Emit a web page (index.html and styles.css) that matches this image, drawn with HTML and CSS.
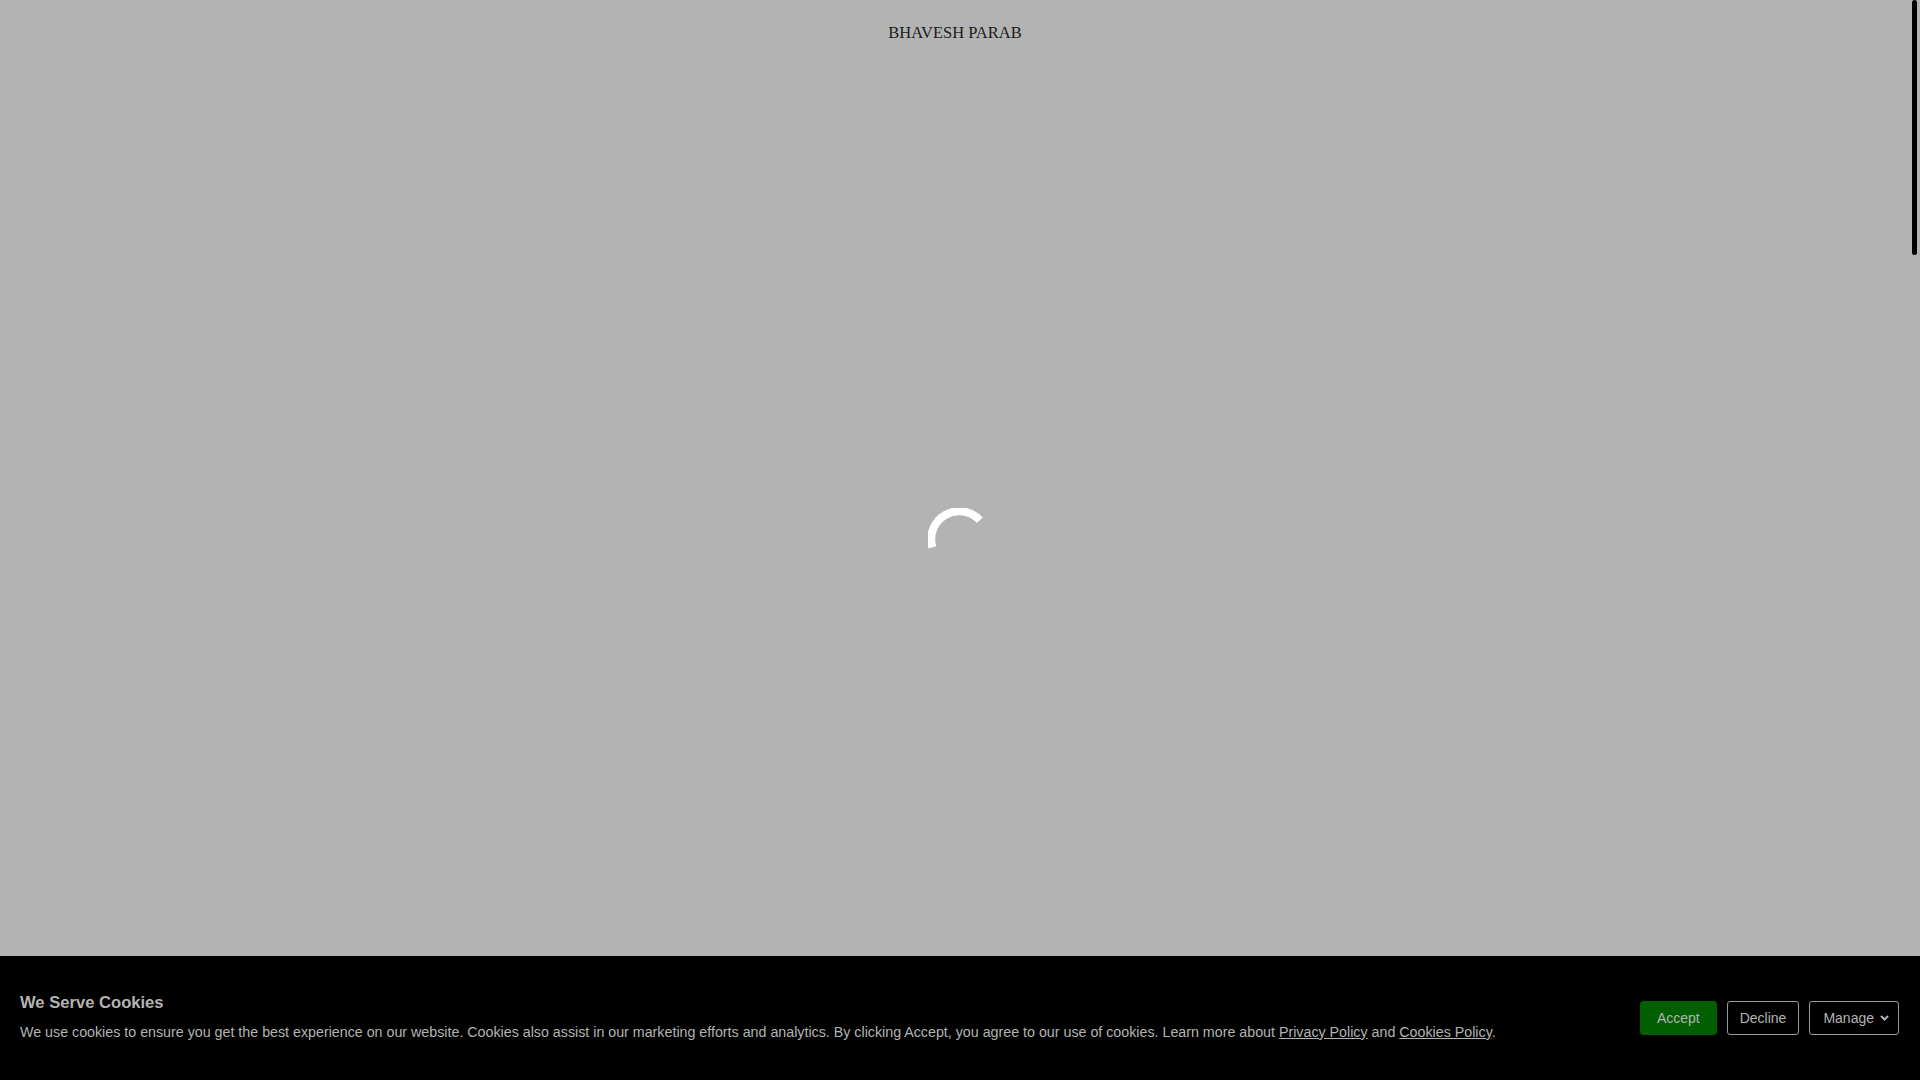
FILE: index.html
```html
<!DOCTYPE html>
<html lang="en">
<head>
<meta charset="utf-8">
<title>Bhavesh Parab</title>
<link rel="stylesheet" href="styles.css">
</head>
<body>
<header class="site-header">
  <div class="brand">BHAVESH PARAB</div>
</header>

<div class="loader" aria-label="Loading">
  <svg width="64" height="64" viewBox="0 0 64 64">
    <path d="M4.45 39.38 A28 28 0 0 1 51.8 12.2" fill="none" stroke="#ffffff" stroke-width="8" stroke-linecap="butt"/>
  </svg>
</div>

<div class="scroll-thumb"></div>

<div class="cookie-bar">
  <div class="cookie-text">
    <div class="cookie-title">We Serve Cookies</div>
    <div class="cookie-body">We use cookies to ensure you get the best experience on our website. Cookies also assist in our marketing efforts and analytics. By clicking Accept, you agree to our use of cookies. Learn more about <a href="#" class="cookie-link">Privacy Policy</a> and <a href="#" class="cookie-link">Cookies Policy</a>.</div>
  </div>
  <div class="cookie-actions">
    <button class="btn btn-accept">Accept</button>
    <button class="btn btn-outline">Decline</button>
    <button class="btn btn-outline btn-manage">Manage
      <svg class="chev" width="9" height="6" viewBox="0 0 9 6"><path d="M1 1 L4.5 4.5 L8 1" fill="none" stroke="#b3b3b3" stroke-width="2"/></svg>
    </button>
  </div>
</div>
</body>
</html>
```

FILE: styles.css
```css
html, body {
  margin: 0;
  padding: 0;
  height: 100%;
  overflow: hidden;
}

body {
  background: #b3b3b3;
  font-family: "Liberation Sans", Arial, sans-serif;
}

.site-header {
  padding: 24px 10px 0 0;
  text-align: center;
}

.brand {
  font-family: "Liberation Serif", "Times New Roman", serif;
  font-size: 16.5px;
  line-height: 18px;
  color: #1c1c1c;
}

.loader {
  position: fixed;
  left: 928px;
  top: 508px;
  width: 64px;
  height: 64px;
}

.loader svg {
  display: block;
}

.scroll-thumb {
  position: fixed;
  top: 0;
  right: 3px;
  width: 5px;
  height: 255px;
  border-radius: 3px;
  background: #000;
}

.cookie-bar {
  position: fixed;
  left: 0;
  right: 0;
  bottom: 0;
  height: 124px;
  background: #000;
  display: flex;
  align-items: center;
  justify-content: space-between;
  padding: 0 21px 0 20px;
  box-sizing: border-box;
  color: #b3b3b3;
}

.cookie-text {
  margin-bottom: 2px;
}

.cookie-title {
  font-weight: bold;
  font-size: 16.6px;
  line-height: 20px;
  margin-bottom: 9px;
  color: #b3b3b3;
}

.cookie-body {
  font-size: 14.26px;
  line-height: 20px;
  color: #b3b3b3;
}

.cookie-link {
  color: #b3b3b3;
  text-decoration: underline;
}

.cookie-actions {
  display: flex;
  align-items: center;
  gap: 10px;
  margin-top: -1px;
}

.btn {
  font-family: "Liberation Sans", Arial, sans-serif;
  font-size: 14px;
  height: 34px;
  line-height: 16px;
  border-radius: 3px;
  color: #b3b3b3;
  background: transparent;
  box-sizing: border-box;
  display: flex;
  align-items: center;
  cursor: pointer;
}

.btn-accept {
  background: #015f01;
  border: 1px solid #015f01;
  padding: 0 16px;
}

.btn-outline {
  border: 1px solid #9a9a9a;
  padding: 0 12px;
}

.btn-manage {
  padding: 0 9px 0 13px;
  gap: 6px;
}

.chev {
  display: block;
  margin-top: 1px;
}
```
